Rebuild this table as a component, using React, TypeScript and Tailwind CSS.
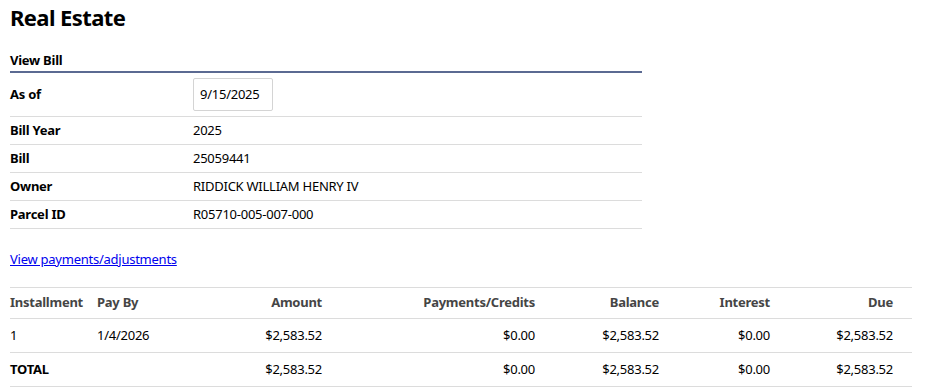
const rows = [
  { label: "Bill Year", value: "2025" },
  { label: "Bill", value: "25059441" },
  { label: "Owner", value: "RIDDICK WILLIAM HENRY IV" },
  { label: "Parcel ID", value: "R05710-005-007-000" },
];

const cols = ["Installment", "Pay By", "Amount", "Payments/Credits", "Balance", "Interest", "Due"];

const widths = ["w-[87px]", "w-[100px]", "w-[125px]", "w-[213px]", "w-[124px]", "w-[111px]", "w-[123px]"];

const data = [
  ["1", "1/4/2026", "$2,583.52", "$0.00", "$2,583.52", "$0.00", "$2,583.52"],
  ["TOTAL", "", "$2,583.52", "$0.00", "$2,583.52", "$0.00", "$2,583.52"],
];

export default function App() {
  return (
    <div className="min-h-screen bg-white px-[10px] pt-[2px] text-[13px] tracking-[-0.25px] text-black font-['Noto_Sans',sans-serif]">
      <h1 className="text-[22px] font-bold leading-[30px] tracking-[-0.6px]">Real Estate</h1>

      <div className="mt-[19px] w-[632px]">
        <div className="font-bold leading-[18px] pb-[2px] border-b-2 border-[#5b6a92]">View Bill</div>
        <div className="flex items-center h-[44px] border-b border-[#dcdcdc]">
          <div className="w-[183px] font-bold">As of</div>
          <div className="w-[80px] h-[33px] border border-[#d4d4d4] rounded-[2px] flex items-center px-[6px]">9/15/2025</div>
        </div>
        {rows.map((r) => (
          <div key={r.label} className="flex items-center h-[28px] border-b border-[#dcdcdc]">
            <div className="w-[183px] font-bold">{r.label}</div>
            <div>{r.value}</div>
          </div>
        ))}
      </div>

      <a href="#" className="block mt-[21px] text-[#0000ee] underline leading-[18px]">
        View payments/adjustments
      </a>

      <table className="mt-[19px] w-[902px] border-collapse">
        <thead>
          <tr className="border-y border-[#dcdcdc] h-[31px]">
            {cols.map((c, i) => (
              <th
                key={c}
                className={`${widths[i]} font-bold text-[#454545] p-0 ${i < 2 ? "text-left" : "text-right"}`}
              >
                {c}
              </th>
            ))}
            <th className="p-0" />
          </tr>
        </thead>
        <tbody>
          {data.map((row, ri) => (
            <tr key={ri} className="border-b border-[#dcdcdc] h-[34px]">
              {row.map((v, i) => (
                <td
                  key={i}
                  className={`p-0 ${i < 2 ? "text-left" : "text-right"} ${ri === 1 && i === 0 ? "font-bold" : ""}`}
                >
                  {v}
                </td>
              ))}
              <td className="p-0" />
            </tr>
          ))}
        </tbody>
      </table>
    </div>
  );
}
